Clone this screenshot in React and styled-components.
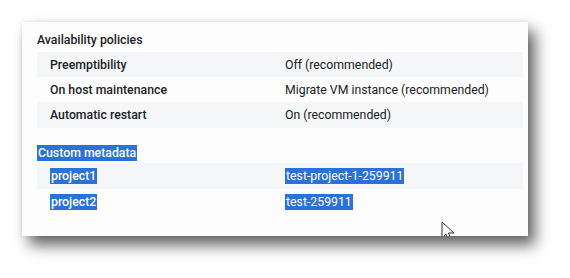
import React from "react";
import styled, { createGlobalStyle } from "styled-components";

const Global = createGlobalStyle`
  body {
    margin: 0;
    background: #ffffff;
    font-family: Roboto, "Liberation Sans", sans-serif;
  }
`;

const Page = styled.div`
  width: 570px;
  height: 278px;
  padding: 22px 0 0 22px;
  box-sizing: border-box;
`;

const Card = styled.div`
  position: relative;
  width: 506px;
  height: 214px;
  box-sizing: border-box;
  padding: 10px 5px 0 15px;
  background: #fdfdfd;
  overflow: hidden;
  box-shadow: 7px 9px 14px rgba(0, 0, 0, 0.62), 0 0 5px rgba(0, 0, 0, 0.08);
`;

const Title = styled.div`
  font-size: 12.3px;
  font-weight: 500;
  line-height: 16px;
  color: #202124;
  margin: ${(p) => (p.$spaced ? "17px 0 2px" : "0 0 4px")};
`;

const Row = styled.div`
  display: grid;
  grid-template-columns: 248px 1fr;
  align-items: center;
  height: ${(p) => p.$h || 25}px;
  background: ${(p) => (p.$shaded ? "#f5f6f7" : "transparent")};
  font-size: 12.3px;
  color: #202124;
`;

const Label = styled.div`
  padding-left: 13px;
  font-weight: 500;
`;

const Value = styled.div`
  font-weight: 400;
`;

const Sel = styled.span`
  background: #2a72d8;
  color: #ffffff;
  padding: 1px 1px;
`;

const Cursor = styled.svg`
  position: absolute;
  left: 419px;
  top: 199px;
`;

const policies = [
  ["Preemptibility", "Off (recommended)"],
  ["On host maintenance", "Migrate VM instance (recommended)"],
  ["Automatic restart", "On (recommended)"],
];

const metadata = [
  ["project1", "test-project-1-259911"],
  ["project2", "test-259911"],
];

export default function App() {
  return (
    <Page>
      <Global />
      <Card>
        <Title>Availability policies</Title>
        {policies.map(([k, v], i) => (
          <Row key={k} $shaded={i % 2 === 0} $h={i === 2 ? 26 : 25}>
            <Label>{k}</Label>
            <Value>{v}</Value>
          </Row>
        ))}
        <Title $spaced>
          <Sel>Custom metadata</Sel>
        </Title>
        {metadata.map(([k, v], i) => (
          <Row key={k} $shaded={i === 0} $h={26}>
            <Label>
              <Sel>{k}</Sel>
            </Label>
            <Value>
              <Sel>{v}</Sel>
            </Value>
          </Row>
        ))}
        <Cursor width="14" height="22" viewBox="0 0 14 22">
          <path
            d="M1 1 L1 17 L5 13 L8 20 L10.5 19 L7.5 12 L13 12 Z"
            fill="#ffffff"
            stroke="#333333"
            strokeWidth="1"
            strokeLinejoin="round"
          />
        </Cursor>
      </Card>
    </Page>
  );
}
